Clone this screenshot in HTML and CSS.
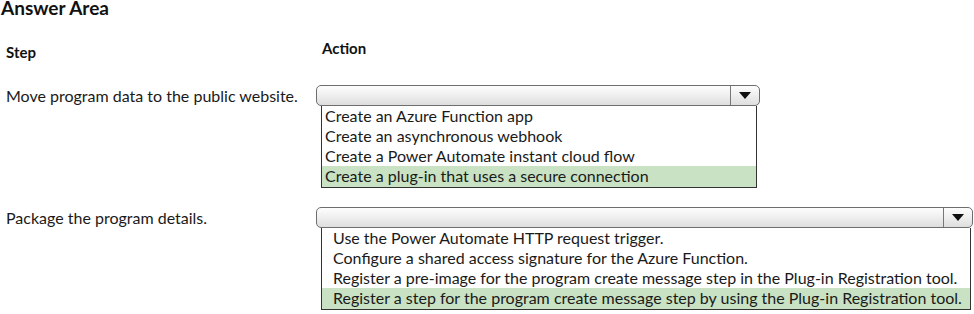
FILE: index.html
```html
<!DOCTYPE html>
<html lang="en">
<head>
  <meta charset="UTF-8">
  <title>Answer Area</title>
  <link rel="stylesheet" href="styles.css">
</head>
<body>
  <h1 class="title">Answer Area</h1>

  <div class="answer-grid">
    <div class="col-head step-head">Step</div>
    <div class="col-head action-head">Action</div>

    <div class="step-label">Move program data to the public website.</div>
    <div class="action">
      <div class="select select-short">
        <span class="select-field"></span>
        <span class="select-arrow"></span>
      </div>
      <ul class="options options-short">
        <li>Create an Azure Function app</li>
        <li>Create an asynchronous webhook</li>
        <li>Create a Power Automate instant cloud flow</li>
        <li class="chosen">Create a plug-in that uses a secure connection</li>
      </ul>
    </div>

    <div class="step-label">Package the program details.</div>
    <div class="action">
      <div class="select select-long">
        <span class="select-field"></span>
        <span class="select-arrow"></span>
      </div>
      <ul class="options options-long">
        <li>Use the Power Automate HTTP request trigger.</li>
        <li>Configure a shared access signature for the Azure Function.</li>
        <li>Register a pre-image for the program create message step in the Plug-in Registration tool.</li>
        <li class="chosen">Register a step for the program create message step by using the Plug-in Registration tool.</li>
      </ul>
    </div>
  </div>
</body>
</html>
```

FILE: styles.css
```css
body {
  margin: 0;
  background-color: #fff;
  color: #1a1a1a;
  font-family: Lato, 'Open Sans', sans-serif;
  font-size: 16px;
}
.title {
  margin: 0;
  padding-left: 1px;
  font-size: 19px;
  line-height: 15px;
  font-weight: 700;
  height: 15px;
  color: #111;
}
.answer-grid {
  display: grid;
  grid-template-columns: 316px auto;
}
.col-head {
  font-size: 15px;
  font-weight: 700;
  color: #111;
}
.step-head {
  padding: 28px 0 0 6px;
  height: 42px;
}
.action-head {
  padding: 24px 0 0 6px;
}
.step-label {
  padding: 2px 0 0 6px;
  line-height: 17px;
}
.action {
  display: flex;
  flex-direction: column;
  align-items: flex-start;
  margin-bottom: 19px;
}
.select {
  display: flex;
  height: 21px;
  box-sizing: border-box;
  border: 1px solid #6e6e6e;
  border-radius: 5px;
  background: linear-gradient(#fdfdfd, #f0f0f0 45%, #dedede);
}
.select-short {
  width: 444px;
}
.select-long {
  width: 657px;
}
.select-field {
  flex: 1;
}
.select-arrow {
  width: 28px;
  border-left: 1px solid #777;
  display: flex;
  align-items: center;
  justify-content: center;
}
.select-arrow::after {
  content: "";
  border-left: 6px solid transparent;
  border-right: 6px solid transparent;
  border-top: 7px solid #111;
}
.options {
  list-style: none;
  margin: 0 0 0 5px;
  padding: 0;
  border: 1px solid #333;
  border-top: none;
  box-sizing: border-box;
}
.options-short {
  width: 436px;
}
.options-long {
  width: 650px;
}
.options li {
  height: 20px;
  line-height: 20px;
  white-space: nowrap;
}
.options-short li {
  padding-left: 3px;
}
.options-long li {
  padding-left: 11px;
}
.options li.chosen {
  background-color: #c8e2c3;
  height: 21px;
}
```
